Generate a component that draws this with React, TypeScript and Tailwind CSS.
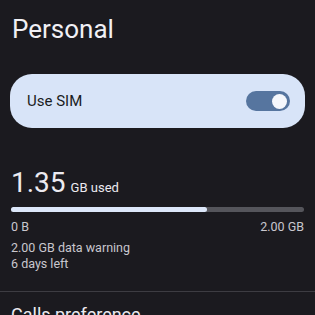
import React from "react";

export default function App() {
  return (
    <div className="w-[315px] h-[315px] overflow-hidden bg-[#1b1a1f] text-white" style={{ fontFamily: "Roboto, 'Noto Sans', sans-serif" }}>
      <div className="pl-[12px] pt-[14px] text-[26px] leading-[30px] text-[#f1f0f5]">Personal</div>
      <div className="mx-[10px] mt-[30px] h-[54px] rounded-[22px] bg-[#d8e4f8] flex items-center pl-[17px] pr-[15px]">
        <span className="text-[#1a1c22] text-[15px] flex-1">Use SIM</span>
        <div className="w-[44px] h-[20px] rounded-full bg-[#56759f] flex items-center justify-end pr-[3px]">
          <div className="w-[15px] h-[15px] rounded-full bg-[#f5f7fc]" />
        </div>
      </div>
      <div className="px-[11px] mt-[40px]">
        <div className="flex items-baseline gap-[5px] text-[#eceaf0]">
          <span className="text-[28px] leading-[30px]">1.35</span>
          <span className="text-[13px]">GB used</span>
        </div>
        <div className="mt-[9px] h-[5px] rounded-full bg-[#55555b] flex">
          <div className="w-[196px] h-full rounded-full bg-[#dce7f9]" />
        </div>
        <div className="mt-[8px] flex justify-between text-[12.5px] leading-[14px] text-[#c9c7ce]">
          <span>0 B</span>
          <span>2.00 GB</span>
        </div>
        <div className="mt-[6px] text-[12.5px] leading-[16px] text-[#c9c7ce]">
          <div>2.00 GB data warning</div>
          <div>6 days left</div>
        </div>
      </div>
      <div className="mt-[19px] h-px bg-[#3d3c42]" />
      <div className="pl-[11px] pt-[12px] text-[18px] leading-[22px] text-[#eceaf0]">Calls preference</div>
    </div>
  );
}
